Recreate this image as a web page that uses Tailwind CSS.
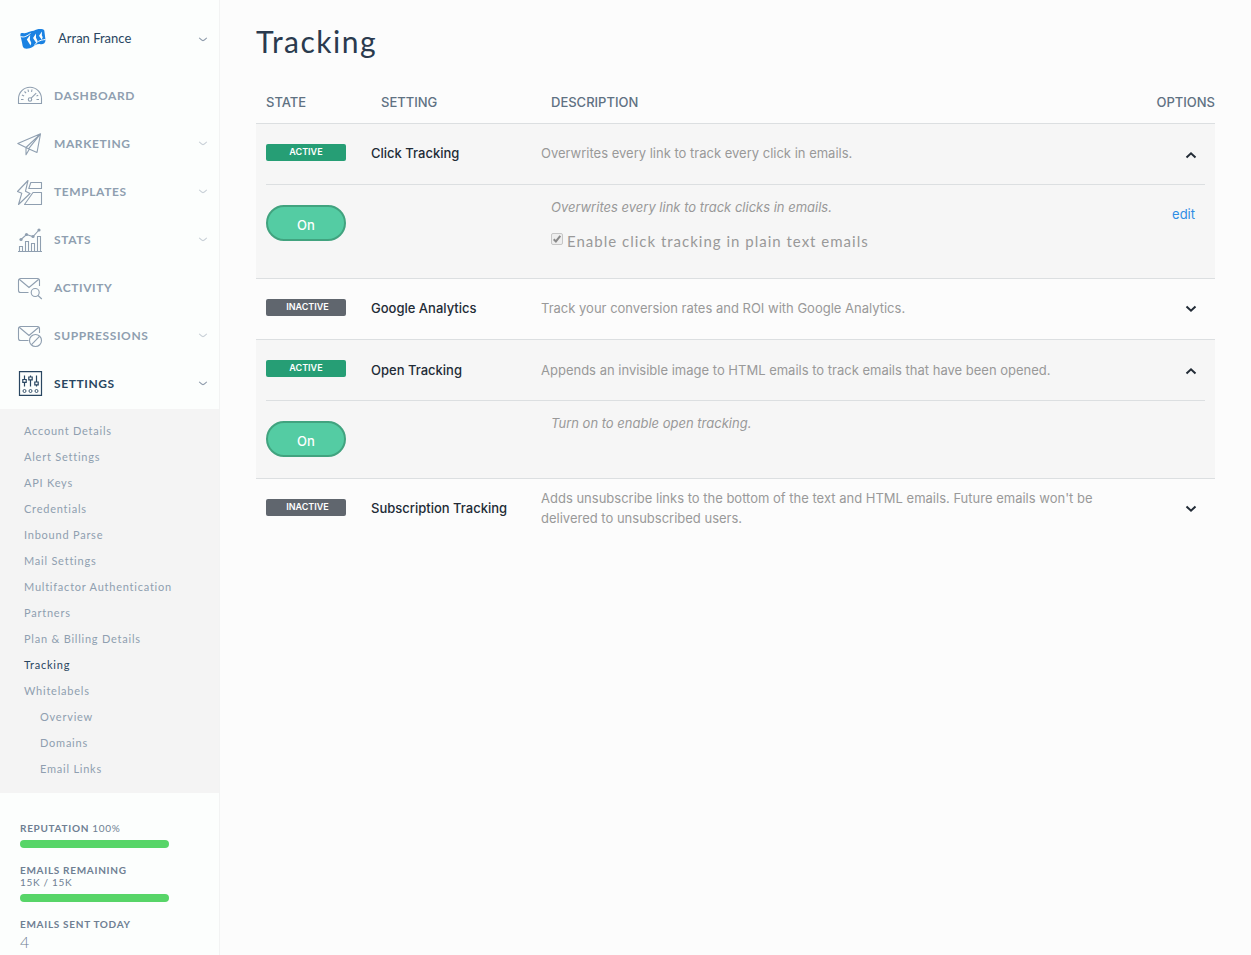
<!DOCTYPE html>
<html lang="en">
<head>
<meta charset="utf-8">
<title>Tracking</title>
<script src="https://cdn.jsdelivr.net/npm/@tailwindcss/browser@4"></script>
</head>
<body class="flex min-h-screen bg-[#fcfcfc] font-['Lato','Liberation_Sans',sans-serif]">
<svg class="hidden" aria-hidden="true">
  <symbol id="chev" viewBox="0 0 10 5"><path d="M1 1c1.6.3 2.4 2.6 4 2.6S7.4 1.300 9 1" fill="none" stroke="currentColor" stroke-width="1.2"/></symbol>
  <symbol id="caret" viewBox="0 0 12 8"><path d="M1.5 1.500 6 5.700 10.500 1.500" fill="none" stroke="currentColor" stroke-width="2"/></symbol>
</svg>

<aside class="flex w-[220px] shrink-0 flex-col border-r border-[#f2f3f3] bg-[#fcfefd]">
  <button type="button" class="flex h-[72px] items-center pt-[6px] pr-[11px] pl-5 text-left text-[13px] text-[#294661]">
    <svg class="h-5 w-[26px]" viewBox="0 0 26 20" aria-hidden="true">
      <path d="M.5 4.800C.8 3.600 2.500 4.300 4.500 4.200 8 4 9.500 2.200 12 2c2.500 0 4-1.700 6.500-1.900C21-.1 23.800.2 24.300 1.600L25.500 11c0 3-2 4.500-5 4.200-4-.6-5.500 1.300-8 2.800-2.500 1.300-6 2.200-8.300 1.200C2.500 18.300 2.500 16 2 13.500L.4 6.500Z" fill="#1a82e2"/>
      <path d="M.5 7.500C4.500 9 7.500 6.500 10.500 4.500M14.500 16.500c1.500-3.500 5.500-5.500 11-6" fill="none" stroke="#fcfefd" stroke-width="1"/>
      <path d="M10.200 6 6.800 10.500 10.500 16.500 11.300 14 9.800 10.500ZM16 4.500l-3 4.500 3.500 5.300 1-2.600-1.500-3ZM22 2.500 19 6.800l2.700 4 1-2.500-.9-2Z" fill="#fcfefd"/>
    </svg>
    <span class="ml-3">Arran France</span>
    <svg class="ml-auto h-[5px] w-[10px] text-[#8f9cac]"><use href="#chev"/></svg>
  </button>

  <nav class="text-[12px] text-[#8f9fb0]" aria-label="Main">
    <ul class="font-bold tracking-wider">
      <li><a href="#" class="flex h-12 items-center pr-[11px] pl-[17px]">
        <svg class="size-[26px]" viewBox="0 0 26 26" fill="none" stroke="currentColor" stroke-width="1.1"><path d="M1.500 20.500v-4.800a11.500 11.500 0 0 1 23 0v4.800Z"/><circle cx="13" cy="16.500" r="1.700"/><path d="m14.200 15.200 5-5M4 16.500h2.500M19.500 16.500H22M4.900 12l2.200 1M7.500 8.500l1.600 1.600M11 6.500l.5 2.300M15 6.500l-.5 2.300M21.200 12.200l-1.700.8"/></svg>
        <span class="ml-[11px]">DASHBOARD</span></a></li>
      <li><a href="#" class="flex h-12 items-center pr-[11px] pl-[17px]">
        <svg class="size-[26px]" viewBox="0 0 26 26" fill="none" stroke="currentColor" stroke-width="1.1" stroke-linejoin="round"><path d="M.8 12.500 23.500 2.800 20 21.500l-8.500-3.700ZM23.500 2.800 9 16.500.8 12.500M9 16.500v7.300l3.300-5.600M23.500 2.800 11.500 17.800"/></svg>
        <span class="ml-[11px]">MARKETING</span>
        <svg class="mb-[2px] ml-auto h-[5px] w-[10px] text-[#c9d0d7]"><use href="#chev"/></svg></a></li>
      <li><a href="#" class="flex h-12 items-center pr-[11px] pl-[17px]">
        <svg class="size-[26px]" viewBox="0 0 26 26" fill="none" stroke="currentColor" stroke-width="1.1" stroke-linejoin="round"><path d="M11 1.500.5 12.500l4.300 1.700L1.500 25.500 13 14.500l-4.500-2.300Z"/><path d="M13.800 3.500h10.700v6H11.800ZM16 13.500h8.500v12H7.500Z"/></svg>
        <span class="ml-[11px]">TEMPLATES</span>
        <svg class="mb-[2px] ml-auto h-[5px] w-[10px] text-[#c9d0d7]"><use href="#chev"/></svg></a></li>
      <li><a href="#" class="flex h-12 items-center pr-[11px] pl-[17px]">
        <svg class="size-[26px]" viewBox="0 0 26 26" fill="none" stroke="currentColor" stroke-width="1.1"><path d="M1 24.500h24M2.500 24.500v-5h3v5M8.500 24.500v-10h3v10M14.500 24.500v-8h3v8M20.500 24.500v-15h3v15M4 12.500l5.500-5 6.500 2L22 3"/><g fill="currentColor" stroke="none"><circle cx="4" cy="12.500" r="1.600"/><circle cx="9.500" cy="7.500" r="1.600"/><circle cx="16" cy="9.500" r="1.600"/><circle cx="22" cy="3" r="1.600"/></g></svg>
        <span class="ml-[11px]">STATS</span>
        <svg class="mb-[2px] ml-auto h-[5px] w-[10px] text-[#c9d0d7]"><use href="#chev"/></svg></a></li>
      <li><a href="#" class="flex h-12 items-center pr-[11px] pl-[17px]">
        <svg class="size-[26px]" viewBox="0 0 26 26" fill="none" stroke="currentColor" stroke-width="1.1"><path d="M11.500 17.500h-8a2 2 0 0 1-2-2v-10a2 2 0 0 1 2-2h17a2 2 0 0 1 2 2v5.500M2.500 4.500 12 12.500l9.500-8"/><circle cx="18.200" cy="17.500" r="4"/><path d="m21 20.500 3.800 3.500"/></svg>
        <span class="ml-[11px]">ACTIVITY</span></a></li>
      <li><a href="#" class="flex h-12 items-center pr-[11px] pl-[17px]">
        <svg class="size-[26px]" viewBox="0 0 26 26" fill="none" stroke="currentColor" stroke-width="1.1"><path d="M11.500 17.500h-8a2 2 0 0 1-2-2v-10a2 2 0 0 1 2-2h17a2 2 0 0 1 2 2v4.500M2.500 4.500 12 12.500l9.500-8"/><circle cx="18.500" cy="17.500" r="6"/><path d="m14.500 21.700 8-8.400"/></svg>
        <span class="ml-[11px]">SUPPRESSIONS</span>
        <svg class="mb-[2px] ml-auto h-[5px] w-[10px] text-[#c9d0d7]"><use href="#chev"/></svg></a></li>
      <li><a href="#" class="flex h-12 items-center pr-[11px] pl-[17px] text-[#294661]">
        <svg class="size-[26px]" viewBox="0 0 26 26" fill="none" stroke="currentColor" stroke-width="1.2"><path d="M2.500 .7h22v23.600h-22Z"/><path d="M7.500 4.500v4M7.500 11.500v4M13.500 4.500v1.500M13.500 9v6.500M19.500 4.500v6.500M19.500 14v1.500"/><path d="M5.800 8.500h3.400v2.800H5.800ZM11.800 6h3.400v2.800h-3.400ZM17.800 11h3.400v2.800h-3.400Z"/><circle cx="7.500" cy="20" r="1.500" stroke-width=".9"/><circle cx="13.500" cy="20" r="1.500" stroke-width=".9"/><circle cx="19.500" cy="20" r="1.500" stroke-width=".9"/></svg>
        <span class="ml-[11px]">SETTINGS</span>
        <svg class="mb-[2px] ml-auto h-[5px] w-[10px] text-[#8f9cac]"><use href="#chev"/></svg></a></li>
    </ul>
    <ul class="mt-px bg-[#f4f4f4] pt-[9px] pb-[11px] pl-6 text-[11px] leading-[26px] tracking-[0.07em]">
      <li><a href="#">Account Details</a></li>
      <li><a href="#">Alert Settings</a></li>
      <li><a href="#">API Keys</a></li>
      <li><a href="#">Credentials</a></li>
      <li><a href="#">Inbound Parse</a></li>
      <li><a href="#">Mail Settings</a></li>
      <li><a href="#">Multifactor Authentication</a></li>
      <li><a href="#">Partners</a></li>
      <li><a href="#">Plan &amp; Billing Details</a></li>
      <li><a href="#" class="text-[#294661]" aria-current="page">Tracking</a></li>
      <li><a href="#">Whitelabels</a>
        <ul class="pl-4">
          <li><a href="#">Overview</a></li>
          <li><a href="#">Domains</a></li>
          <li><a href="#">Email Links</a></li>
        </ul>
      </li>
    </ul>
  </nav>

  <section class="px-5 pt-[29px] text-[10px] leading-3 tracking-[0.07em] text-[#6f7f93]">
    <p><b>REPUTATION</b> 100%</p>
    <div class="mt-[6px] h-2 w-[149px] rounded-full bg-[#57d568]"></div>
    <p class="mt-4 font-bold">EMAILS REMAINING</p>
    <p>15K / 15K</p>
    <div class="mt-[6px] h-2 w-[149px] rounded-full bg-[#57d568]"></div>
    <p class="mt-4 font-bold">EMAILS SENT TODAY</p>
    <p class="mt-[3px] text-[16px] leading-[18px] font-light">4</p>
  </section>
</aside>

<main class="min-w-0 flex-1 px-9 pt-[21px]">
  <h1 class="text-[30px] leading-10 tracking-wider text-[#2a3a4e]">Tracking</h1>
  <table class="mt-[21px] w-full table-fixed border-collapse font-['Inter','Liberation_Sans',sans-serif] text-[13px] leading-5 text-[#999]">
    <colgroup><col class="w-[105px]"><col class="w-[170px]"><col><col class="w-[100px]"></colgroup>
    <thead>
      <tr class="h-[41px] text-left text-[#5f7182]">
        <th scope="col" class="pl-[10px] font-medium">STATE</th>
        <th scope="col" class="pl-5 font-medium">SETTING</th>
        <th scope="col" class="pl-5 font-medium">DESCRIPTION</th>
        <th scope="col" class="text-right font-medium">OPTIONS</th>
      </tr>
    </thead>
    <tbody class="border-t border-[#dcdfe1] bg-[#f6f6f6]">
      <tr class="h-[61px]">
        <td class="pb-[2px] pl-[10px]"><span class="block h-[17px] w-20 rounded-xs bg-[#269e75] text-center text-[9px] leading-4 font-semibold text-white">ACTIVE</span></td>
        <td class="pb-[2px] pl-[10px] font-medium text-[#222b36]">Click Tracking</td>
        <td class="pb-[2px] pl-[10px]">Overwrites every link to track every click in emails.</td>
        <td class="pr-[18px] text-right"><button type="button" aria-label="Collapse Click Tracking" class="align-middle text-[#222b36]"><svg class="h-2 w-3 rotate-180"><use href="#caret"/></svg></button></td>
      </tr>
      <tr>
        <td colspan="4" class="px-[10px]">
          <div class="flex min-h-[94px] border-t border-[#dcdfe1]">
            <button type="button" class="mt-5 h-9 w-20 rounded-full border-2 border-[#41a37f] bg-[#54cca3] pt-1 font-medium text-white">On</button>
            <div class="ml-[205px] pt-3">
              <p class="italic">Overwrites every link to track clicks in emails.</p>
              <label class="mt-[14px] flex items-start gap-1 font-['Lato','Liberation_Sans',sans-serif] text-[15px] tracking-[1px]">
                <span class="relative mt-[2px] size-3 shrink-0">
                  <input type="checkbox" checked disabled class="block size-3 appearance-none rounded-xs border border-[#c6c6c6] bg-[#eeeeee]">
                  <svg class="absolute inset-0 size-3" viewBox="0 0 12 12" aria-hidden="true"><path d="m2.700 6.200 2.200 2.200 4.400-5.600" fill="none" stroke="#8a8a8a" stroke-width="2"/></svg>
                </span>
                Enable click tracking in plain text emails
              </label>
            </div>
            <a href="#" class="mt-[19px] mr-[10px] mb-auto ml-auto text-[#2f8de4]">edit</a>
          </div>
        </td>
      </tr>
    </tbody>
    <tbody class="border-t border-[#dcdfe1]">
      <tr class="h-[61px]">
        <td class="pb-[3px] pl-[10px]"><span class="block h-[17px] w-20 rounded-xs bg-[#60666e] pl-[3px] text-center text-[9px] leading-4 font-semibold text-white">INACTIVE</span></td>
        <td class="pb-[2px] pl-[10px] font-medium text-[#222b36]">Google Analytics</td>
        <td class="pb-[2px] pl-[10px]">Track your conversion rates and ROI with Google Analytics.</td>
        <td class="pr-[18px] pb-[3px] text-right"><button type="button" aria-label="Expand Google Analytics" class="align-middle text-[#222b36]"><svg class="h-2 w-3"><use href="#caret"/></svg></button></td>
      </tr>
    </tbody>
    <tbody class="border-t border-[#dcdfe1] bg-[#f6f6f6]">
      <tr class="h-[60px]">
        <td class="pb-[2px] pl-[10px]"><span class="block h-[17px] w-20 rounded-xs bg-[#269e75] text-center text-[9px] leading-4 font-semibold text-white">ACTIVE</span></td>
        <td class="pl-[10px] font-medium text-[#222b36]">Open Tracking</td>
        <td class="pl-[10px]">Appends an invisible image to HTML emails to track emails that have been opened.</td>
        <td class="pr-[18px] text-right"><button type="button" aria-label="Collapse Open Tracking" class="align-middle text-[#222b36]"><svg class="h-2 w-3 rotate-180"><use href="#caret"/></svg></button></td>
      </tr>
      <tr>
        <td colspan="4" class="px-[10px]">
          <div class="flex min-h-[78px] border-t border-[#dcdfe1]">
            <button type="button" class="mt-5 h-9 w-20 rounded-full border-2 border-[#41a37f] bg-[#54cca3] pt-1 font-medium text-white">On</button>
            <p class="ml-[205px] pt-3 italic">Turn on to enable open tracking.</p>
          </div>
        </td>
      </tr>
    </tbody>
    <tbody class="border-t border-[#dcdfe1]">
      <tr class="h-[61px]">
        <td class="pb-[3px] pl-[10px]"><span class="block h-[17px] w-20 rounded-xs bg-[#60666e] pl-[3px] text-center text-[9px] leading-4 font-semibold text-white">INACTIVE</span></td>
        <td class="pb-[2px] pl-[10px] font-medium text-[#222b36]">Subscription Tracking</td>
        <td class="pb-[2px] pl-[10px]"><p class="max-w-[570px]">Adds unsubscribe links to the bottom of the text and HTML emails. Future emails won't be delivered to unsubscribed users.</p></td>
        <td class="pr-[18px] pb-[3px] text-right"><button type="button" aria-label="Expand Subscription Tracking" class="align-middle text-[#222b36]"><svg class="h-2 w-3"><use href="#caret"/></svg></button></td>
      </tr>
    </tbody>
  </table>
</main>
</body>
</html>
